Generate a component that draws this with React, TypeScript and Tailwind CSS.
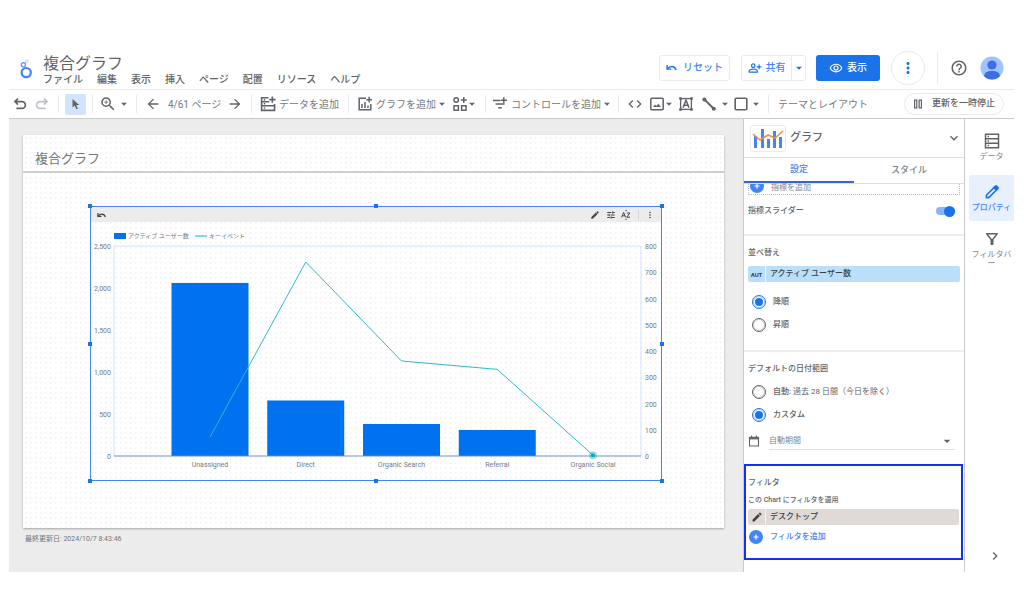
import React from 'react';
import {
  MdArrowBack,
  MdArrowDropDown,
  MdArrowForward,
  MdChevronRight,
  MdCode,
  MdEdit,
  MdExpandMore,
  MdHelpOutline,
  MdMoreVert,
  MdOutlineRemoveRedEye,
  MdOutlineFilterAlt,
  MdOutlinePersonAddAlt,
  MdTune,
  MdZoomIn,
} from 'react-icons/md';

const menuItems = ['ファイル', '編集', '表示', '挿入', 'ページ', '配置', 'リソース', 'ヘルプ'];

const chartData = [
  { channel: 'Unassigned', users: 2060, events: 72 },
  { channel: 'Direct', users: 661, events: 739 },
  { channel: 'Organic Search', users: 381, events: 362 },
  { channel: 'Referral', users: 310, events: 330 },
  { channel: 'Organic Social', users: 0, events: 3 },
];

const userTicks = [0, 500, 1000, 1500, 2000, 2500];
const eventTicks = [0, 100, 200, 300, 400, 500, 600, 700, 800];

const handlePositions = [
  '-left-[3px] -top-[3px]',
  'left-1/2 -ml-[2px] -top-[3px]',
  '-right-[3px] -top-[3px]',
  '-left-[3px] top-1/2 -mt-[2px]',
  '-right-[3px] top-1/2 -mt-[2px]',
  '-left-[3px] -bottom-[3px]',
  'left-1/2 -ml-[2px] -bottom-[3px]',
  '-right-[3px] -bottom-[3px]',
];

function ResetIcon({ className }: { className: string }) {
  return (
    <svg viewBox="0 0 14 9" className={className} fill="none" stroke="currentColor" strokeWidth="1.9" aria-hidden="true">
      <path d="M1.4 1.2v5.4h5.4" />
      <path d="M1.8 6.2C4.6 2.4 10.8 1.400 13 7.600" />
    </svg>
  );
}

function UndoIcon({ className }: { className: string }) {
  return (
    <svg viewBox="0 0 14 14" className={className} fill="none" stroke="currentColor" strokeWidth="1.7" aria-hidden="true">
      <path d="M5 1.6 2 4.6l3 3" />
      <path d="M2 4.6h7a3.4 3.4 0 0 1 0 6.8H3.4" />
    </svg>
  );
}

function LogoIcon() {
  return (
    <svg viewBox="0 0 14 20" className="h-5 w-[14px]" fill="none" stroke="#4285f4" aria-hidden="true">
      <circle cx="7.2" cy="13.6" r="4.6" strokeWidth="2.2" />
      <circle cx="4.4" cy="5.8" r="2.1" strokeWidth="1.4" stroke="#669df6" />
      <circle cx="7.6" cy="2.4" r="1.4" strokeWidth="1" stroke="#aecbfa" />
    </svg>
  );
}

function AddDataIcon() {
  return (
    <svg viewBox="0 0 16 16" className="size-4" fill="none" stroke="currentColor" strokeWidth="1.6" aria-hidden="true">
      <path d="M8.5 1.8H1.6v4h7.600M1.600 5.800v4h13V8M1.600 9.800v4.600h13V9.800" />
      <path d="M12.3.4v6.400M9.200 3.600h6.400" />
      <path d="M3.800 3.800h1.400M3.800 7.800h1.400M3.800 12h1.400" />
    </svg>
  );
}

function AddChartIcon() {
  return (
    <svg viewBox="0 0 16 16" className="size-4" fill="none" stroke="currentColor" strokeWidth="1.5" aria-hidden="true">
      <path d="M9 2.2H2.2v11.6h11.6V8" />
      <path d="M12.2.8v5.8M9.3 3.7h5.8" />
      <path d="M5 12V8M8 12V6M11 12V9.6" />
    </svg>
  );
}

function AddVisualIcon() {
  return (
    <svg viewBox="0 0 16 16" className="size-4" fill="none" stroke="currentColor" strokeWidth="1.5" aria-hidden="true">
      <circle cx="4.2" cy="4" r="2.2" />
      <path d="M2 9.8h4.4v4.4H2zM9.6 9.8H14v4.4H9.6z" />
      <path d="M11.8 1v6M8.8 4h6" />
    </svg>
  );
}

function AddControlIcon() {
  return (
    <svg viewBox="0 0 16 16" className="size-4" fill="none" stroke="currentColor" strokeWidth="1.5" aria-hidden="true">
      <path d="M1 4.4h7.6M3.6 8h9M6.2 11.8h3.6" />
      <path d="M11.8 1.2v6M9 4.2h6" />
    </svg>
  );
}

function ImageIcon() {
  return (
    <svg viewBox="0 0 16 16" className="size-4" aria-hidden="true">
      <rect x="1.8" y="2.2" width="12.4" height="11.6" rx="1" fill="none" stroke="currentColor" strokeWidth="1.5" />
      <path d="m4 11 2-2.6L7.4 10 9.2 7.8 12 11z" fill="currentColor" />
    </svg>
  );
}

function TextFrameIcon() {
  return (
    <svg viewBox="0 0 16 16" className="size-4" fill="none" stroke="currentColor" strokeWidth="1.3" aria-hidden="true">
      <rect x="2.6" y="2.6" width="10.8" height="10.8" />
      <path d="m5 11.6 3-7.4 3 7.4M6 9.2h4" strokeWidth="1.5" />
      <path d="M1.2 1.2h2.6v2.6H1.2zM12.2 1.2h2.6v2.6h-2.6zM1.2 12.2h2.6v2.6H1.2zM12.2 12.2h2.6v2.6h-2.6z" fill="currentColor" stroke="none" />
    </svg>
  );
}

function LineIcon() {
  return (
    <svg viewBox="0 0 16 16" className="size-4" aria-hidden="true">
      <path d="m3.4 3.4 9.4 9.4" stroke="currentColor" strokeWidth="2" />
      <circle cx="3.4" cy="3.4" r="2" fill="currentColor" />
      <circle cx="12.8" cy="12.8" r="2" fill="currentColor" />
    </svg>
  );
}

function PencilOutlineIcon() {
  return (
    <svg viewBox="0 0 16 16" className="size-4" fill="none" stroke="currentColor" strokeWidth="1.6" aria-hidden="true">
      <path d="M2.400 11.200 10 3.600l2.400 2.400-7.600 7.600H2.400z" />
      <path d="m10.200 3.400 1.200-1.200c.5-.5 1-.5 1.400 0l1 1c.5.5.5 1 0 1.400l-1.200 1.200z" fill="currentColor" />
    </svg>
  );
}

function ComboChartIcon() {
  return (
    <svg viewBox="0 0 32 22" className="h-[22px] w-8" aria-hidden="true">
      <path d="M2 9h3v12H2zM9 2h3v19H9zM15 12h3v9h-3zM21 4h3v17h-3zM27 10h3v11h-3z" fill="#4285f4" />
      <path d="m1 7 7 6 8-5 7 3 8-7" fill="none" stroke="#fa903e" strokeWidth="1.6" />
    </svg>
  );
}

function SortAzIcon() {
  return (
    <svg viewBox="0 0 10 10" className="size-[10px]" fill="none" stroke="currentColor" strokeWidth="1" aria-hidden="true">
      <path d="m.6 7.400 2-5 2 5M1.300 5.800h2.600M5.800 3h3L5.800 7.200h3.200" />
      <path d="M4 1 5 .3 6 1M4 9l1 .7L6 9" strokeWidth=".7" />
    </svg>
  );
}

function Caret({ className = '' }: { className?: string }) {
  return <MdArrowDropDown className={`size-[14px] shrink-0 ${className}`} aria-hidden="true" />;
}

function Divider({ className = '' }: { className?: string }) {
  return <span className={`h-[18px] w-px shrink-0 bg-[#e8eaed] ${className}`} />;
}

function Header() {
  return (
    <header className="flex h-[42px] items-center border-b border-[#e8eaed] px-[10px]">
      <LogoIcon />
      <div className="ml-[10px] flex-1 pt-[5px]">
        <h1 className="text-base leading-[18px] text-[#5f6368]">複合グラフ</h1>
        <nav className="flex gap-[14px] text-[10px] leading-[14px] font-medium text-[#5f6368]">
          {menuItems.map(item => (
            <button key={item} type="button">{item}</button>
          ))}
        </nav>
      </div>
      <div className="mb-[2px] flex items-center text-[10px] font-medium text-[#4285f4]">
        <button type="button" className="flex h-[26px] w-[71px] items-center justify-center gap-[6px] rounded-[3px] border border-[#e8eaed]">
          <ResetIcon className="h-[7px] w-[11px] text-[#1a73e8]" />
          リセット
        </button>
        <div className="ml-[11px] flex h-[26px] rounded-[3px] border border-[#e8eaed]">
          <button type="button" className="flex w-[49px] items-center justify-center gap-1">
            <MdOutlinePersonAddAlt className="size-[14px] text-[#1a73e8]" aria-hidden="true" />
            共有
          </button>
          <button type="button" aria-label="共有オプション" className="flex w-[14px] items-center justify-center border-l border-[#e8eaed] text-[#1a73e8]">
            <Caret />
          </button>
        </div>
        <button type="button" className="ml-[10px] flex h-[26px] w-16 items-center justify-center gap-1 rounded-[3px] bg-[#1a73e8] text-white">
          <MdOutlineRemoveRedEye className="size-[14px]" aria-hidden="true" />
          表示
        </button>
        <button type="button" aria-label="その他" className="ml-[11px] flex size-[34px] items-center justify-center rounded-full border border-[#e8eaed]">
          <MdMoreVert className="size-[18px] text-[#1a73e8]" />
        </button>
        <span className="ml-3 h-8 w-px bg-[#e8eaed]" />
        <button type="button" aria-label="ヘルプ" className="ml-3">
          <MdHelpOutline className="size-[18px] text-[#5f6368]" />
        </button>
        <button type="button" aria-label="アカウント" className="ml-3">
          <svg viewBox="0 0 24 24" className="size-6" aria-hidden="true">
            <circle cx="12" cy="12" r="11.5" fill="#a0c3ff" />
            <circle cx="12" cy="9" r="4.6" fill="#3c6fe0" />
            <path d="M4.2 20.4C4 16.6 7 15 12 15s8 1.600 7.800 5.400A11.500 11.500 0 0 1 12 23.500a11.500 11.500 0 0 1-7.800-3.100z" fill="#3c6fe0" />
          </svg>
        </button>
      </div>
    </header>
  );
}

function Toolbar() {
  return (
    <div className="flex h-[29px] items-center border-b border-[#c8cacd] px-[10px] text-[10px] whitespace-nowrap text-[#757a80]">
      <div className="-ml-[6px] flex flex-1 items-center">
        <button type="button" aria-label="元に戻す" className="text-[#5f6368]"><UndoIcon className="size-[14px]" /></button>
        <button type="button" aria-label="やり直す" className="ml-2 text-[#bdc1c6]"><UndoIcon className="size-[14px] -scale-x-100" /></button>
        <Divider className="ml-[9px]" />
        <button type="button" aria-label="選択" className="ml-[6px] flex size-[21px] items-center justify-center rounded-[2px] bg-[#d2e3fc] text-[#5f6368]">
          <svg viewBox="0 0 10 12" className="h-3 w-[10px]" aria-hidden="true">
            <path d="M1.500 1v8.500l2.200-2 1.700 3.700 1.500-.7-1.700-3.600h3z" fill="currentColor" />
          </svg>
        </button>
        <Divider className="ml-[6px]" />
        <button type="button" aria-label="ズーム" className="ml-[6px] flex items-center text-[#5f6368]">
          <MdZoomIn className="size-[18px]" />
          <Caret />
        </button>
        <Divider className="ml-[5px]" />
        <button type="button" aria-label="前のページ" className="ml-2 text-[#5f6368]"><MdArrowBack className="size-4" /></button>
        <span className="ml-[7px] w-[53px]">4/61 ページ</span>
        <button type="button" aria-label="次のページ" className="ml-[6px] text-[#5f6368]"><MdArrowForward className="size-4" /></button>
        <Divider className="ml-[8px]" />
        <button type="button" className="ml-2 flex items-center gap-[3px]"><span className="text-[#5f6368]"><AddDataIcon /></span>データを追加</button>
        <Divider className="ml-[9px]" />
        <button type="button" className="ml-2 flex items-center gap-[3px]"><span className="text-[#5f6368]"><AddChartIcon /></span>グラフを追加<Caret className="-ml-[4px] text-[#5f6368]" /></button>
        <button type="button" aria-label="ビジュアルを追加" className="ml-[3px] flex items-center text-[#5f6368]"><AddVisualIcon /><Caret className="-ml-[3px]" /></button>
        <Divider className="ml-[6px]" />
        <button type="button" className="ml-[6px] flex items-center gap-[3px]"><span className="text-[#5f6368]"><AddControlIcon /></span>コントロールを追加<Caret className="-ml-[4px] text-[#5f6368]" /></button>
        <Divider className="ml-[4px]" />
        <div className="flex items-center text-[#5f6368]">
          <button type="button" aria-label="URL を埋め込む" className="ml-2"><MdCode className="size-4" /></button>
          <button type="button" aria-label="画像" className="ml-[6px] flex items-center"><ImageIcon /><Caret className="-ml-[3px]" /></button>
          <button type="button" aria-label="テキスト" className="ml-[2px]"><TextFrameIcon /></button>
          <button type="button" aria-label="線" className="ml-[7px] flex items-center"><LineIcon /><Caret className="ml-px" /></button>
          <button type="button" aria-label="図形" className="ml-px flex items-center">
            <svg viewBox="0 0 16 16" className="size-4" aria-hidden="true">
              <rect x="2.200" y="2.200" width="11.600" height="11.600" rx="1" fill="none" stroke="currentColor" strokeWidth="1.600" />
            </svg>
            <Caret />
          </button>
        </div>
        <Divider className="ml-[5px]" />
        <button type="button" className="ml-[9px]">テーマとレイアウト</button>
      </div>
      <button type="button" className="flex h-[22px] w-[100px] items-center justify-center gap-[9px] rounded-full border border-[#e8eaed] text-[9px] font-medium text-[#5f6368]">
        <svg viewBox="0 0 10 10" className="size-[10px]" fill="none" stroke="currentColor" strokeWidth="1.200" aria-hidden="true">
          <path d="M1.600 1.200h2.200v7.600H1.600zM6.200 1.200h2.200v7.600H6.200z" />
        </svg>
        更新を一時停止
      </button>
    </div>
  );
}

function ComboChart() {
  const left = 23;
  const right = 550;
  const top = 24;
  const bottom = 234;
  const firstCenter = 119;
  const step = 383 / 4;
  const barWidth = 77;

  const yUsers = (value: number) => bottom - (value / 2500) * (bottom - top);
  const yEvents = (value: number) => bottom - (value / 800) * (bottom - top);
  const xCenter = (index: number) => firstCenter + index * step;

  const linePoints = chartData.map((d, index) => `${xCenter(index)},${yEvents(d.events)}`).join(' ');
  const last = chartData.length - 1;

  return (
    <svg viewBox="0 0 570 258" className="block w-full text-[7px]" fill="#757b87" role="img" aria-label="アクティブ ユーザー数とキーイベント">
      <rect x={23} y={11} width={12} height={6} fill="#0072f0" />
      <text x={37} y={16} className="text-[6px]">アクティブ ユーザー数</text>
      <path d="M104 14h12" stroke="#00b6cb" strokeWidth={1} />
      <text x={118} y={16} className="text-[6px]">キーイベント</text>

      <path d={`M${left} ${bottom}V${top}H${right}V${bottom}`} fill="none" stroke="#d3e1fb" strokeWidth={1} />
      {userTicks.map(tick => (
        <text key={tick} x={20} y={yUsers(tick) + 3} textAnchor="end">{tick.toLocaleString('en-US')}</text>
      ))}
      {eventTicks.map(tick => (
        <text key={tick} x={554} y={yEvents(tick) + 3}>{tick}</text>
      ))}

      {chartData.map((d, index) => (
        <g key={d.channel}>
          <rect
            x={xCenter(index) - barWidth / 2}
            y={yUsers(d.users)}
            width={barWidth}
            height={bottom - yUsers(d.users)}
            fill="#0072f0"
          />
          <text x={xCenter(index)} y={bottom + 11} textAnchor="middle">{d.channel}</text>
        </g>
      ))}
      <path d={`M${left} ${bottom}H${right}`} stroke="#6f8fc4" strokeWidth={1} />
      <polyline points={linePoints} fill="none" stroke="#2bb9cc" strokeWidth={1} />
      <circle cx={xCenter(last)} cy={yEvents(chartData[last].events)} r={4} fill="#00b6cb" opacity={0.4} />
      <circle cx={xCenter(last)} cy={yEvents(chartData[last].events)} r={2} fill="#12a4b8" />
    </svg>
  );
}

function Canvas() {
  return (
    <main className="min-w-0 flex-1 bg-[#ececec] pt-4 pr-[19px] pl-[14px]">
      <div className="bg-white bg-[radial-gradient(#f5f5f7_1px,transparent_1px)] bg-[size:5px_5px] pb-[47px] shadow-[0_1px_2px_rgba(0,0,0,0.3)]">
        <h2 className="h-[38px] border-b-2 border-[#cfcfcf] pt-[15px] pl-3 text-[13px] leading-[18px] text-[#757575]">複合グラフ</h2>
        <div className="relative mt-[33px] mr-[62px] ml-[67px] border border-[#4285f4]">
          <div className="flex h-[15px] items-center bg-[#ececec] px-[6px] text-[#444746]">
            <ResetIcon className="h-[6px] w-[9px]" />
            <MdEdit className="ml-auto size-[10px]" aria-hidden="true" />
            <MdTune className="ml-[6px] size-[10px]" aria-hidden="true" />
            <span className="ml-[5px]"><SortAzIcon /></span>
            <span className="ml-[7px] h-[10px] w-px bg-[#d5d5d5]" />
            <MdMoreVert className="ml-[6px] size-[10px]" aria-hidden="true" />
          </div>
          <ComboChart />
          {handlePositions.map(position => (
            <span key={position} className={`absolute size-1 bg-[#1a73e8] ${position}`} />
          ))}
        </div>
      </div>
      <p className="mt-[6px] pl-[2px] text-[7px] leading-[10px] text-[#757575]">最終更新日: 2024/10/7 8:43:46</p>
    </main>
  );
}

interface RadioProps {
  name: string;
  defaultChecked?: boolean;
  children: React.ReactNode;
}

function Radio({ name, defaultChecked, children }: RadioProps) {
  return (
    <label className="flex h-[23px] items-center gap-[7px] pl-1 text-[8px] font-medium">
      <input
        type="radio"
        name={name}
        defaultChecked={defaultChecked}
        className="flex size-[14px] appearance-none items-center justify-center rounded-full border border-[#5f6368] ring-1 ring-[#5f6368]/30 ring-inset before:size-2 before:rounded-full checked:border-[#1a73e8] checked:ring-[#1a73e8]/30 checked:before:bg-[#1a73e8]"
      />
      <span>{children}</span>
    </label>
  );
}

function PlusCircle() {
  return (
    <svg viewBox="0 0 14 14" className="size-[14px] shrink-0" aria-hidden="true">
      <circle cx="7" cy="7" r="7" fill="#4285f4" />
      <path d="M7 4.500v5M4.500 7h5" stroke="#fff" strokeWidth="1.200" />
    </svg>
  );
}

function PropertyPanel() {
  return (
    <aside className="flex w-[222px] shrink-0 flex-col border-x border-[#c8cacd] text-[8px] text-[#5f6368]">
      <div className="flex h-[39px] items-center border-b border-[#e0e0e0] pr-[2px] pl-[6px]">
        <span className="flex h-[27px] w-9 items-center justify-center rounded-[3px] border border-[#e8eaed]"><ComboChartIcon /></span>
        <h2 className="ml-1 text-[11px] font-medium">グラフ</h2>
        <button type="button" aria-label="グラフの種類" className="ml-auto"><MdExpandMore className="size-4" /></button>
      </div>
      <div role="tablist" className="grid h-[26px] grid-cols-2 border-b border-[#e0e0e0] text-[9px] font-medium">
        <button type="button" role="tab" aria-selected="true" className="border-b-2 border-[#3367d6] text-[#4285f4]">設定</button>
        <button type="button" role="tab" aria-selected="false" className="text-[#80868b]">スタイル</button>
      </div>
      <div className="flex-1">
        <section className="flex h-[52px] flex-col border-b-2 border-[#ececec] px-1">
          <button type="button" className="flex h-[11px] w-full items-start gap-[7px] border border-t-0 border-dotted border-[#bdbdbd] pl-px text-[#80868b]">
            <span className="flex h-[9px] items-end overflow-hidden"><PlusCircle /></span>
            <span className="leading-[8px]">指標を追加</span>
          </button>
          <label className="mt-[9px] flex h-[14px] items-center justify-between pr-[5px] font-medium">
            指標スライダー
            <input
              type="checkbox"
              role="switch"
              defaultChecked
              className="flex h-[8px] w-[19px] appearance-none items-center justify-end rounded-full bg-[#8ab4f8] before:size-[11px] before:shrink-0 before:rounded-full before:bg-[#1a73e8]"
            />
          </label>
        </section>

        <section className="h-[116px] border-b-2 border-[#ececec] px-1 pt-[11px]">
          <h3 className="leading-[12px] font-medium">並べ替え</h3>
          <button type="button" className="mt-[7px] flex h-4 w-full items-center rounded-[2px] bg-[#bbdefb] font-medium text-[#3c4043]">
            <span className="flex h-full w-[18px] items-center justify-center border-r border-white/70 text-[6px] font-bold">AUT</span>
            <span className="ml-1">アクティブ ユーザー数</span>
          </button>
          <div className="mt-2">
            <Radio name="sort" defaultChecked>降順</Radio>
            <Radio name="sort">昇順</Radio>
          </div>
        </section>

        <section className="h-[112px] px-1 pt-[11px]">
          <h3 className="leading-[12px] font-medium">デフォルトの日付範囲</h3>
          <div className="mt-[5px]">
            <Radio name="dateRange">自動: <span className="font-normal">過去 28 日間（今日を除く）</span></Radio>
            <Radio name="dateRange" defaultChecked>カスタム</Radio>
          </div>
          <div className="mt-[6px] flex items-center">
            <svg viewBox="0 0 12 12" className="size-3" fill="none" stroke="currentColor" strokeWidth="1.100" aria-hidden="true">
              <path d="M1.500 2.200h9v8.800h-9zM3.600.6v2M8.400.6v2" />
              <path d="M1.500 3.300h9" strokeWidth="2.200" />
            </svg>
            <button type="button" className="mr-[5px] ml-[9px] flex h-[18px] flex-1 items-center justify-between border-b border-[#e0e0e0] text-[#80868b]">
              自動期間
              <MdArrowDropDown className="size-4 text-[#5f6368]" aria-hidden="true" />
            </button>
          </div>
        </section>

        <section className="mr-px h-[96px] border-2 border-[#1232f0] px-[2px] pt-[11px]">
          <h3 className="leading-[12px] font-medium">フィルタ</h3>
          <p className="mt-[5px] text-[7px] leading-[12px] font-medium">この Chart にフィルタを適用</p>
          <button type="button" className="mt-[3px] flex h-4 w-full items-center rounded-[2px] bg-[#dfdad6] font-medium text-[#3c4043]">
            <span className="flex h-full w-[18px] items-center justify-center border-r border-white/70"><MdEdit className="size-[12px]" aria-hidden="true" /></span>
            <span className="ml-1">デスクトップ</span>
          </button>
          <button type="button" className="mt-[5px] flex items-center gap-[7px] pl-px font-medium text-[#4285f4]">
            <PlusCircle />
            フィルタを追加
          </button>
        </section>
      </div>
    </aside>
  );
}

function SideRail() {
  return (
    <nav className="flex w-[49px] shrink-0 flex-col pt-[10px] pl-1 text-[8px] leading-[10px] text-[#80868b]">
      <button type="button" className="flex h-[46px] flex-col items-center pt-1">
        <svg viewBox="0 0 16 16" className="size-4 text-[#5f6368]" fill="none" stroke="currentColor" strokeWidth="1.500" aria-hidden="true">
          <path d="M1.500 1.200h13v13.600h-13zM1.500 5.700h13M1.500 10.200h13M3.600 3.500h1.500M3.600 8h1.500M3.600 12.500h1.500" />
        </svg>
        <span className="mt-[3px]">データ</span>
      </button>
      <button type="button" className="flex h-[46px] flex-col items-center rounded-l-[3px] bg-[#e8f0fe] pt-[9px] font-medium text-[#4285f4]">
        <span className="text-[#1a73e8]"><PencilOutlineIcon /></span>
        <span className="mt-[3px]">プロパティ</span>
      </button>
      <button type="button" className="mt-[9px] flex flex-col items-center">
        <MdOutlineFilterAlt className="size-[18px] text-[#5f6368]" aria-hidden="true" />
        <span className="mt-[2px] w-10 text-center leading-[9px] break-all">フィルタバー</span>
      </button>
      <button type="button" aria-label="パネルを閉じる" className="mt-auto mb-2 ml-[18px]"><MdChevronRight className="size-4 text-[#5f6368]" /></button>
    </nav>
  );
}

export default function App() {
  return (
    <div className="min-h-screen bg-white pt-12 pr-[10px] pb-[42px] pl-[9px] font-['Roboto','Noto_Sans_CJK_JP',sans-serif]">
      <Header />
      <Toolbar />
      <div className="flex min-h-[453px]">
        <Canvas />
        <PropertyPanel />
        <SideRail />
      </div>
    </div>
  );
}
